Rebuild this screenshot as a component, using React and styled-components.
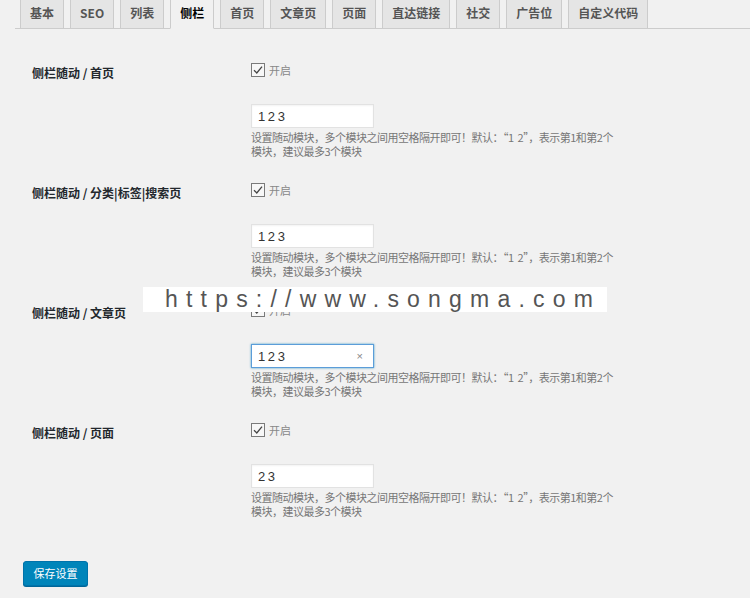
import React from "react";
import styled, { createGlobalStyle } from "styled-components";

const Global = createGlobalStyle`
  html, body { margin: 0; padding: 0; background: #f1f1f1; }
  body { font-family: "Noto Sans CJK SC", "Noto Sans", sans-serif; color: #444; }
  * { box-sizing: border-box; }
`;

const Page = styled.div`
  position: relative;
  width: 750px;
  height: 598px;
  overflow: hidden;
  padding-left: 15px;
  background: #f1f1f1;
`;

const TabBar = styled.div`
  display: flex;
  align-items: flex-end;
  gap: 6px;
  padding-left: 5px;
  height: 29px;
  border-bottom: 1px solid #ccc;
`;

const Tab = styled.div`
  height: 29px;
  margin-bottom: -1px;
  padding: 0 9px;
  border: 1px solid #ccc;
  border-top: none;
  border-bottom-color: ${(p) => (p.$active ? "#f1f1f1" : "#ccc")};
  background: ${(p) => (p.$active ? "#f1f1f1" : "#e5e5e5")};
  color: ${(p) => (p.$active ? "#000" : "#555")};
  font-size: 12px;
  font-weight: 700;
  line-height: 26px;
  white-space: nowrap;
`;

const Form = styled.div`
  display: flex;
  flex-direction: column;
  gap: 25px;
  padding: 34px 0 0 8px;
`;

const Row = styled.div`
  display: grid;
  grid-template-columns: 228px 1fr;
`;

const Label = styled.div`
  padding: 3px 0 0 9px;
  font-size: 12px;
  line-height: 14px;
  font-weight: 700;
  color: #23282d;
`;

const Field = styled.div`
  display: flex;
  flex-direction: column;
  align-items: flex-start;
`;

const CheckLine = styled.div`
  display: flex;
  align-items: center;
  gap: 4px;
  height: 14px;
  font-size: 11px;
  line-height: 14px;
  color: #888;
`;

const Box = styled.span`
  display: inline-flex;
  align-items: center;
  justify-content: center;
  width: 14px;
  height: 14px;
  border: 1px solid #7a7a7a;
  background: #f7f7f7;
`;

const InputWrap = styled.div`
  position: relative;
  margin-top: 27px;
`;

const TextInput = styled.input`
  display: block;
  width: 123px;
  height: 24px;
  margin: 0;
  padding: 0 6px;
  border: 1px solid ${(p) => (p.$focus ? "#5b9dd9" : "#e2e2e2")};
  box-shadow: ${(p) =>
    p.$focus ? "0 0 2px rgba(30,140,190,.8)" : "inset 0 1px 2px rgba(0,0,0,.05)"};
  background: #fff;
  font-family: "Liberation Sans", sans-serif;
  font-size: 13px;
  word-spacing: -1px;
  color: #333;
  outline: none;
`;

const Clear = styled.span`
  position: absolute;
  right: 11px;
  top: 5px;
  font-family: "Liberation Sans", sans-serif;
  font-size: 11px;
  line-height: 14px;
  color: #888;
`;

const Desc = styled.div`
  margin-top: 2px;
  font-size: 11px;
  line-height: 14px;
  letter-spacing: -0.5px;
  word-spacing: 2px;
  color: #777;
  white-space: nowrap;
`;

const SaveButton = styled.button`
  margin: 43px 0 0 8px;
  width: 65px;
  height: 25px;
  padding: 0;
  border: 1px solid #0073aa;
  border-radius: 3px;
  background: #0085ba;
  box-shadow: 0 1px 0 #006799;
  color: #fff;
  font-family: "Noto Sans CJK SC", sans-serif;
  font-size: 11px;
  line-height: 23px;
`;

const Watermark = styled.div`
  position: absolute;
  left: 143px;
  top: 287px;
  width: 464px;
  height: 25px;
  background: #fff;
  display: flex;
  align-items: center;
  padding-left: 22px;
  font-family: "Liberation Sans", sans-serif;
  font-size: 23px;
  letter-spacing: 8.2px;
  color: #555;
  white-space: nowrap;
  line-height: 25px;
`;

const tabs = ["基本", "SEO", "列表", "侧栏", "首页", "文章页", "页面", "直达链接", "社交", "广告位", "自定义代码"];

const rows = [
  { label: "侧栏随动 / 首页", value: "1 2 3" },
  { label: "侧栏随动 / 分类|标签|搜索页", value: "1 2 3" },
  { label: "侧栏随动 / 文章页", value: "1 2 3", focus: true },
  { label: "侧栏随动 / 页面", value: "2 3" },
];

function Check() {
  return (
    <Box>
      <svg width="10" height="10" viewBox="0 0 10 10">
        <path d="M1 5.2 L3.8 8 L9 1.6" fill="none" stroke="#444" strokeWidth="1.3" />
      </svg>
    </Box>
  );
}

export default function App() {
  return (
    <Page>
      <Global />
      <TabBar>
        {tabs.map((t) => (
          <Tab key={t} $active={t === "侧栏"}>{t}</Tab>
        ))}
      </TabBar>
      <Form>
        {rows.map((r) => (
          <Row key={r.label}>
            <Label>{r.label}</Label>
            <Field>
              <CheckLine>
                <Check />
                <span>开启</span>
              </CheckLine>
              <InputWrap>
                <TextInput readOnly defaultValue={r.value} $focus={r.focus} />
                {r.focus && <Clear>×</Clear>}
              </InputWrap>
              <Desc>
                设置随动模块，多个模块之间用空格隔开即可！默认：“1 2”，表示第1和第2个
                <br />
                模块，建议最多3个模块
              </Desc>
            </Field>
          </Row>
        ))}
      </Form>
      <SaveButton>保存设置</SaveButton>
      <Watermark>https://www.songma.com</Watermark>
    </Page>
  );
}
